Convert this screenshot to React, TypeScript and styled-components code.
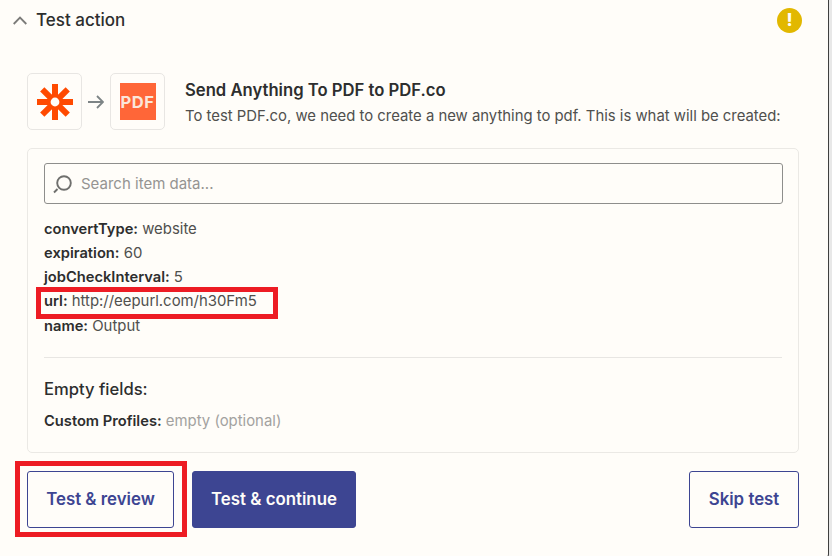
import React from "react";
import styled, { createGlobalStyle } from "styled-components";

const Global = createGlobalStyle`
  html, body { margin: 0; padding: 0; background: #e8e8e8; }
  * { box-sizing: border-box; }
  body { font-family: Inter, "Liberation Sans", sans-serif; }
`;

const Frame = styled.div`
  width: 832px;
  height: 556px;
  overflow: hidden;
  position: relative;
  background: #e8e8e8;
`;

const Panel = styled.div`
  width: 829px;
  height: 558px;
  background: #fffdf9;
  border-right: 1px solid #3f3f3f;
  border-bottom: 1px solid #3f3f3f;
  border-bottom-right-radius: 4px;
  padding: 0 29px 0 13px;
  display: flex;
  flex-direction: column;
`;

const Header = styled.header`
  height: 40px;
  display: flex;
  align-items: center;
  color: #2d2e2e;
`;

const Title = styled.h2`
  margin: 0 0 0 9px;
  font-size: 17px;
  font-weight: 500;
  color: #2d2e2e;
  flex: 1;
`;

const WarnBadge = styled.span`
  width: 25px;
  height: 25px;
  margin-right: -3px;
  border-radius: 50%;
  background: #e2b800;
  color: #fffdf9;
  font-size: 17px;
  font-weight: 800;
  line-height: 25px;
  text-align: center;
`;

const Summary = styled.section`
  margin: 33px 0 0 14px;
  display: flex;
  align-items: center;
`;

const AppTile = styled.div`
  width: 55px;
  height: 57px;
  border: 1px solid #e8e6e3;
  border-radius: 5px;
  display: flex;
  align-items: center;
  justify-content: center;
  flex: none;
`;

const Arrow = styled.div`
  width: 28px;
  display: flex;
  justify-content: center;
`;

const PdfLogo = styled.div`
  width: 36px;
  height: 37px;
  background: #ff6638;
  color: #fbe6da;
  font-size: 16.5px;
  letter-spacing: 0.5px;
  font-weight: 700;
  display: flex;
  align-items: center;
  justify-content: center;
`;

const SummaryText = styled.div`
  margin-left: 20px;
  display: flex;
  flex-direction: column;
  gap: 8px;
  margin-top: 2px;
`;

const SummaryTitle = styled.div`
  font-size: 16.65px;
  font-weight: 600;
  line-height: 18px;
  color: #2d2e2e;
`;

const SummarySub = styled.div`
  font-size: 14.87px;
  line-height: 18px;
  color: #50504e;
  white-space: nowrap;
`;

const Card = styled.section`
  margin: 18px 0 0 14px;
  width: 772px;
  height: 305px;
  border: 1px solid #ebe9e5;
  border-radius: 5px;
  padding: 14px 16px 0;
`;

const Search = styled.div`
  height: 41px;
  width: 739px;
  border: 1px solid #8e8e8c;
  border-radius: 3px;
  display: flex;
  align-items: center;
  padding-left: 7px;
  gap: 9px;
`;

const SearchText = styled.span`
  font-size: 15px;
  color: #959492;
`;

const Rows = styled.div`
  margin-top: 12.5px;
  display: flex;
  flex-direction: column;
`;

const Row = styled.div`
  height: 24.3px;
  line-height: 24px;
  font-size: 14.9px;
  color: #50504e;
  white-space: nowrap;
`;

const Key = styled.b`
  font-weight: 600;
  color: #2d2e2e;
  font-size: 14.7px;
`;

const Muted = styled.span`
  color: #a3a2a0;
`;

const Divider = styled.hr`
  margin: 19.5px 0 0;
  border: 0;
  border-top: 1px solid #e8e6e3;
`;

const EmptyTitle = styled.div`
  margin: 22px 0 10px;
  font-size: 16.6px;
  font-weight: 500;
  line-height: 19px;
  color: #2d2e2e;
`;

const Actions = styled.footer`
  margin: 18px 0 0 14px;
  width: 772px;
  display: flex;
  gap: 18px;
`;

const Button = styled.button<{ $primary?: boolean; $w: number; $push?: boolean }>`
  width: ${(p) => p.$w}px;
  height: 57px;
  border: 1px solid #3d4592;
  border-radius: 3px;
  background: ${(p) => (p.$primary ? "#3d4592" : "transparent")};
  color: ${(p) => (p.$primary ? "#fffdf9" : "#3d4592")};
  font-family: inherit;
  font-size: 16.85px;
  font-weight: 600;
  padding: 0 0 2px;
  margin-left: ${(p) => (p.$push ? "auto" : "0")};
`;

const Callout = styled.div<{ $x: number; $y: number; $w: number; $h: number }>`
  position: absolute;
  left: ${(p) => p.$x}px;
  top: ${(p) => p.$y}px;
  width: ${(p) => p.$w}px;
  height: ${(p) => p.$h}px;
  border: 5px solid #ed1c24;
  pointer-events: none;
`;

const ChevronIcon = () => (
  <svg width="14" height="9" viewBox="0 0 14 9" fill="none" stroke="#7b7b79" strokeWidth="1.8" aria-hidden="true">
    <path d="M.7 8 7 1.5 13.3 8" />
  </svg>
);

const ArrowIcon = () => (
  <svg width="16" height="14" viewBox="0 0 16 14" fill="none" stroke="#7d8486" strokeWidth="1.8" aria-hidden="true">
    <path d="M0 7h15M9 1l6 6-6 6" />
  </svg>
);

const ZapierMark = () => (
  <svg width="36" height="36" viewBox="0 0 36 36" aria-hidden="true">
    <g fill="#ff4a00">
      <rect x="15" y="0" width="6" height="36" />
      <rect x="0" y="15" width="36" height="6" />
      <rect x="15" y="0" width="6" height="36" transform="rotate(45 18 18)" />
      <rect x="15" y="0" width="6" height="36" transform="rotate(-45 18 18)" />
      <circle cx="18" cy="18" r="8" />
    </g>
    <circle cx="18" cy="18" r="4.4" fill="#fffdf9" />
  </svg>
);

const SearchIcon = () => (
  <svg width="20" height="20" viewBox="0 0 20 20" fill="none" stroke="#6f6f6d" strokeWidth="1.9" aria-hidden="true">
    <circle cx="12" cy="9" r="6.8" />
    <path d="M5.5 15 2 18.5" />
  </svg>
);

export default function App() {
  return (
    <Frame>
      <Global />
      <Panel>
        <Header>
          <ChevronIcon />
          <Title>Test action</Title>
          <WarnBadge>!</WarnBadge>
        </Header>
        <Summary>
          <AppTile><ZapierMark /></AppTile>
          <Arrow><ArrowIcon /></Arrow>
          <AppTile><PdfLogo>PDF</PdfLogo></AppTile>
          <SummaryText>
            <SummaryTitle>Send Anything To PDF to PDF.co</SummaryTitle>
            <SummarySub>To test PDF.co, we need to create a new anything to pdf. This is what will be created:</SummarySub>
          </SummaryText>
        </Summary>
        <Card>
          <Search>
            <SearchIcon />
            <SearchText>Search item data...</SearchText>
          </Search>
          <Rows>
            <Row><Key>convertType:</Key> website</Row>
            <Row><Key>expiration:</Key> 60</Row>
            <Row><Key>jobCheckInterval:</Key> 5</Row>
            <Row><Key>url:</Key> http://eepurl.com/h30Fm5</Row>
            <Row><Key>name:</Key> Output</Row>
          </Rows>
          <Divider />
          <EmptyTitle>Empty fields:</EmptyTitle>
          <Row><Key>Custom Profiles:</Key> <Muted>empty (optional)</Muted></Row>
        </Card>
        <Actions>
          <Button $w={147}>Test &amp; review</Button>
          <Button $w={164} $primary>Test &amp; continue</Button>
          <Button $w={110} $push>Skip test</Button>
        </Actions>
      </Panel>
      <Callout $x={36} $y={287} $w={242} $h={32} />
      <Callout $x={15} $y={461} $w={172} $h={76} />
    </Frame>
  );
}
